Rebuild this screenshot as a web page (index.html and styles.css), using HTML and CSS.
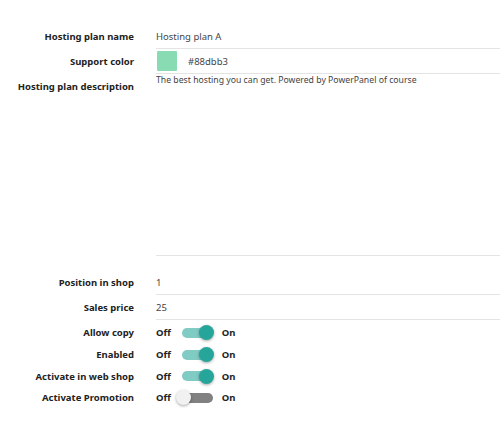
FILE: index.html
```html
<!DOCTYPE html>
<html>
<head>
<meta charset="utf-8">
<link rel="stylesheet" href="styles.css">
</head>
<body>
<form class="form">
  <div class="row row-text">
    <label class="label">Hosting plan name</label>
    <div class="field"><span class="value">Hosting plan A</span></div>
  </div>
  <div class="row row-color">
    <label class="label">Support color</label>
    <div class="field field-color">
      <span class="swatch" style="background:#88dbb3"></span>
      <span class="value">#88dbb3</span>
    </div>
  </div>
  <div class="row row-area">
    <label class="label label-area">Hosting plan description</label>
    <div class="field field-area"><span class="value small">The best hosting you can get. Powered by PowerPanel of course</span></div>
  </div>
  <div class="row row-text row-gap">
    <label class="label">Position in shop</label>
    <div class="field"><span class="value">1</span></div>
  </div>
  <div class="row row-text">
    <label class="label">Sales price</label>
    <div class="field"><span class="value">25</span></div>
  </div>
  <div class="row row-switch first-switch">
    <label class="label">Allow copy</label>
    <div class="switch"><span class="sw-text">Off</span><span class="lever on"><span class="knob"></span></span><span class="sw-text">On</span></div>
  </div>
  <div class="row row-switch">
    <label class="label">Enabled</label>
    <div class="switch"><span class="sw-text">Off</span><span class="lever on"><span class="knob"></span></span><span class="sw-text">On</span></div>
  </div>
  <div class="row row-switch">
    <label class="label">Activate in web shop</label>
    <div class="switch"><span class="sw-text">Off</span><span class="lever on"><span class="knob"></span></span><span class="sw-text">On</span></div>
  </div>
  <div class="row row-switch">
    <label class="label">Activate Promotion</label>
    <div class="switch"><span class="sw-text">Off</span><span class="lever"><span class="knob"></span></span><span class="sw-text">On</span></div>
  </div>
</form>
</body>
</html>
```
FILE: styles.css
```css
html, body {
  margin: 0;
  padding: 0;
  background: #fff;
}
body {
  font-family: "Noto Sans", "Open Sans", sans-serif;
  color: #333;
  width: 500px;
  overflow: hidden;
}
.form {
  padding-top: 24px;
}
.row {
  display: flex;
  align-items: stretch;
}
.label {
  flex: none;
  text-align: right;
  font-weight: 700;
  font-size: 9.5px;
  color: #222;
  padding-right: 22px;
  box-sizing: border-box;
  width: 156px;
  display: flex;
  align-items: center;
  justify-content: flex-end;
}
.field {
  flex: 1;
  border-bottom: 1px solid #e4e4e4;
  display: flex;
  align-items: center;
}
.value {
  font-size: 9.5px;
  color: #444;
}
.value.small {
  font-size: 8.7px;
}
.row-text .field {
  height: 24px;
}
.row-color .field {
  height: 24px;
}
.swatch {
  width: 20px;
  height: 20px;
  margin-left: 1px;
  margin-right: 11px;
  border-radius: 1px;
}
.row-area .field {
  height: 181px;
  align-items: flex-start;
}
.row-area .label {
  align-items: flex-start;
  padding-top: 6px;
}
.row-area .value {
  line-height: 12px;
}
.row-gap {
  margin-top: 14px;
}
.row-switch {
  height: 21.7px;
}
.first-switch {
  margin-top: 2px;
}
.switch {
  display: flex;
  align-items: center;
  font-size: 9.5px;
  font-weight: 700;
  color: #222;
}
.sw-text {
  display: inline-block;
}
.lever {
  position: relative;
  width: 31px;
  height: 10px;
  border-radius: 5px;
  background: #818181;
  margin: 0 9px 0 11px;
}
.lever.on {
  background: #80cbc4;
}
.knob {
  position: absolute;
  top: -2.5px;
  left: -6px;
  width: 15px;
  height: 15px;
  border-radius: 50%;
  background: #f1f1f1;
  box-shadow: 0 1px 3px rgba(0,0,0,0.35);
}
.lever.on .knob {
  left: 17px;
  background: #26a69a;
}
```
